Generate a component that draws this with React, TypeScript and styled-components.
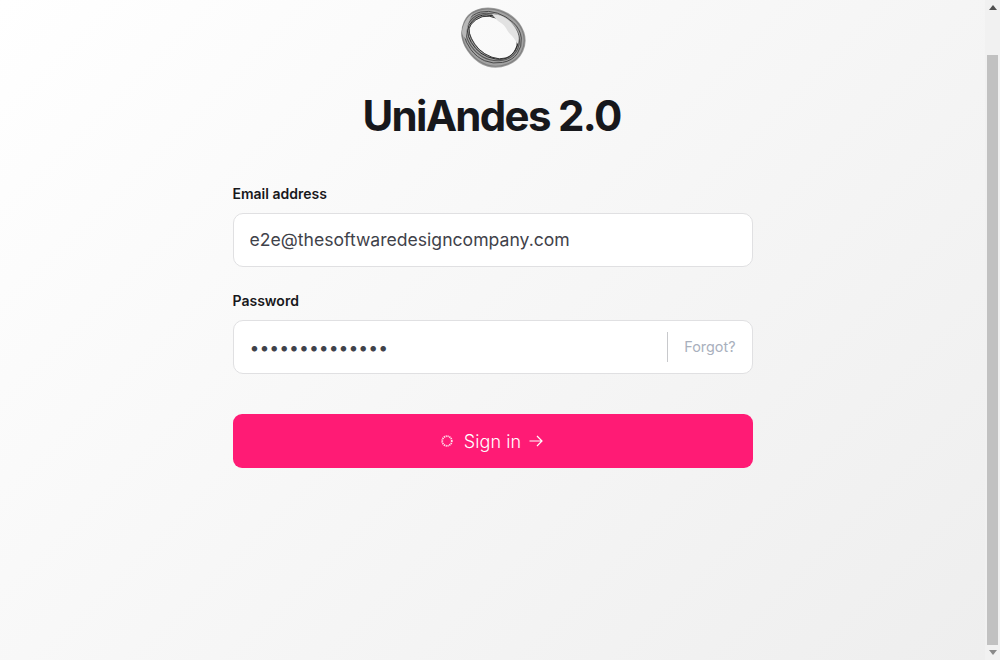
import styled, { createGlobalStyle } from 'styled-components';

const GlobalStyle = createGlobalStyle`
  body {
    margin: 0;
    font-family: Inter, "Liberation Sans", sans-serif;
    color: #18181b;
  }
`;

const Shell = styled.div`
  display: flex;
  height: 660px;
  overflow: hidden;
`;

const Page = styled.main`
  flex: 1;
  display: flex;
  flex-direction: column;
  align-items: center;
  box-sizing: border-box;
  padding-top: 8px;
  background: linear-gradient(135deg, #ffffff 0%, #eeeeee 100%);
`;

const Scrollbar = styled.div`
  display: flex;
  flex-direction: column;
  align-items: center;
  width: 15px;
  background: #f1f1f1;
`;

const ScrollArrow = styled.div<{ $down?: boolean }>`
  display: flex;
  align-items: center;
  justify-content: center;
  flex: none;
  height: 15px;

  &::before {
    content: '';
    border-left: 4px solid transparent;
    border-right: 4px solid transparent;
    ${({ $down }) => ($down ? 'border-top: 5px solid #8a8a8a;' : 'border-bottom: 5px solid #505050;')}
  }
`;

const ScrollTrack = styled.div`
  flex: 1;
  display: flex;
  justify-content: center;
  align-items: flex-end;
  width: 100%;
`;

const ScrollThumb = styled.div`
  width: 11px;
  height: 590px;
  background: #c1c1c1;
`;

const Logo = styled.svg`
  display: block;
  width: 66px;
  height: 60px;
  overflow: visible;
`;

const Title = styled.h1`
  margin: 20px 2px 0 0;
  font-size: 42px;
  line-height: 56px;
  font-weight: 700;
  letter-spacing: -1.68px;
  color: #17181c;
`;

const Form = styled.form`
  display: flex;
  flex-direction: column;
  width: 520px;
  margin-top: 40px;
`;

const Field = styled.div`
  display: flex;
  flex-direction: column;
  gap: 9px;
  margin-bottom: 24px;
`;

const Label = styled.label`
  font-size: 14px;
  line-height: 20px;
  font-weight: 600;
  color: #18181b;
`;

const InputBox = styled.div`
  display: flex;
  align-items: center;
  box-sizing: border-box;
  height: 54px;
  background: #ffffff;
  border: 1px solid #e0e0e2;
  border-radius: 10px;
`;

const Input = styled.input`
  flex: 1;
  min-width: 0;
  height: 100%;
  box-sizing: border-box;
  padding: 0 16px;
  border: 0;
  outline: 0;
  background: transparent;
  font-family: inherit;
  font-size: 17.6px;
  color: #3f424a;

  &[type='email'] {
    padding-bottom: 2px;
  }
`;

const Forgot = styled.a`
  display: flex;
  align-items: center;
  box-sizing: border-box;
  height: 30px;
  padding: 0 16px 2px;
  border-left: 1px solid #c8c9cc;
  font-size: 14.4px;
  color: #a9b0bd;
`;

const Submit = styled.button`
  display: flex;
  align-items: center;
  justify-content: center;
  height: 54px;
  margin-top: 16px;
  padding: 0 1px 0 0;
  border: 0;
  border-radius: 9px;
  background: #ff1b75;
  color: #ffffff;
  font-family: inherit;
  font-size: 18px;
  font-weight: 300;
  letter-spacing: 0.1px;
`;

const Spinner = styled.svg`
  width: 12px;
  height: 12px;
  margin-right: 11px;
`;

const Arrow = styled.svg`
  width: 14px;
  height: 14px;
  margin-left: 8px;
`;

type Pt = [number, number];

// outer edge and hole of the ring, traced from the logo, same point count
const outerEdge: Pt[] = [
  [0, 22], [7.3, 5.3], [24, -1.5], [44, 1.5], [61, 14.5], [67.5, 33.7], [59, 53], [37.3, 61.5], [18, 56], [3.5, 39],
];
const holeEdge: Pt[] = [
  [10.5, 16], [23, 7.5], [38, 10], [51, 22], [59, 35.5], [51, 49], [38, 52], [23, 45], [14, 35], [9, 23.7],
];

const smooth = (pts: Pt[]) => {
  const mid = (a: Pt, b: Pt) => `${(a[0] + b[0]) / 2} ${(a[1] + b[1]) / 2}`;
  let d = `M${mid(pts[pts.length - 1], pts[0])}`;
  pts.forEach((p, i) => {
    d += ` Q${p[0]} ${p[1]} ${mid(p, pts[(i + 1) % pts.length])}`;
  });
  return `${d}Z`;
};

const ringAt = (t: number): Pt[] =>
  holeEdge.map((p, i) => [p[0] + (outerEdge[i][0] - p[0]) * t, p[1] + (outerEdge[i][1] - p[1]) * t]);

const rings = [
  { t: 0.08, color: '#3a3a3a', width: 1 },
  { t: 0.28, color: '#2e2e2e', width: 1 },
  { t: 0.48, color: '#555555', width: 1.1 },
  { t: 0.68, color: '#4a4a4a', width: 1 },
  { t: 0.9, color: '#808080', width: 1.2 },
];

const App = () => {
  return (
    <>
      <GlobalStyle />
      <Shell>
        <Page>
          <Logo viewBox="0 0 66 60">
            <defs>
              <filter id="soft" x="-10%" y="-10%" width="120%" height="120%">
                <feGaussianBlur stdDeviation="0.45" />
              </filter>
            </defs>
            <g filter="url(#soft)">
              <path d={`${smooth(outerEdge)} ${smooth(holeEdge)}`} fill="#a2a2a2" fillRule="evenodd" />
              {rings.map((r) => (
                <path key={r.t} d={smooth(ringAt(r.t))} fill="none" stroke={r.color} strokeWidth={r.width} />
              ))}
              <path d="M32 6 C40 6 48 10 53 17 C58 23 60 29 58 36 C55 33 54 29 50 26 C47 23 46 18 41 15 C37 13 35 10 32 6Z" fill="#e2e2e2" />
              <path d="M2 24 C3 16 7 9 13 5 C9 12 6 20 6 31 C4 29 2 27 2 24Z" fill="#b8b8b8" />
            </g>
          </Logo>
          <Title>UniAndes 2.0</Title>
          <Form onSubmit={(e) => e.preventDefault()}>
            <Field>
              <Label>Email address</Label>
              <InputBox>
                <Input type="email" readOnly value="e2e@thesoftwaredesigncompany.com" />
              </InputBox>
            </Field>
            <Field>
              <Label>Password</Label>
              <InputBox>
                <Input type="password" readOnly value="passwordpasswo" />
                <Forgot>Forgot?</Forgot>
              </InputBox>
            </Field>
            <Submit type="submit">
              <Spinner viewBox="0 0 12 12">
                <circle cx="6" cy="6" r="4.8" fill="none" stroke="#ffdfeb" strokeWidth="1.8" strokeDasharray="1.2 0.68" />
              </Spinner>
              Sign in
              <Arrow viewBox="0 0 14 14" fill="none" stroke="#ffffff" strokeWidth="1.2">
                <path d="M0.5 7 H13 M8 2 L13 7 L8 12" />
              </Arrow>
            </Submit>
          </Form>
        </Page>
        <Scrollbar>
          <ScrollArrow />
          <ScrollTrack>
            <ScrollThumb />
          </ScrollTrack>
          <ScrollArrow $down />
        </Scrollbar>
      </Shell>
    </>
  );
};

export default App;
